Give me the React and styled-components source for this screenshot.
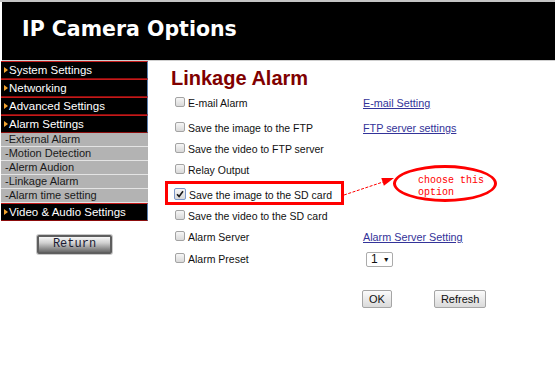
import React from 'react';
import styled, { createGlobalStyle } from 'styled-components';

const GlobalStyle = createGlobalStyle`
  html, body { margin: 0; padding: 0; background: #fff; }
  body { font-family: "Liberation Sans", Arial, sans-serif; }
`;

const Page = styled.div`
  position: relative;
  width: 555px;
  height: 376px;
  overflow: hidden;
  background: #fff;
  border-top: 2px solid #c4c4c4;
  box-sizing: border-box;
`;

const Header = styled.div`
  margin-left: 2px;
  height: 58px;
  background: #000;
  border-bottom: 1px solid #cfcfcf;
`;

const Title = styled.h1`
  margin: 0;
  padding: 15px 0 0 20px;
  font-family: "DejaVu Sans", Verdana, sans-serif;
  font-weight: bold;
  font-size: 20.5px;
  line-height: 24px;
  color: #fff;
`;

const Body = styled.div`
  display: flex;
  align-items: flex-start;
`;

const Sidebar = styled.div`
  width: 147px;
  margin-left: 1px;
  display: flex;
  flex-direction: column;
`;

const MenuItem = styled.div`
  height: 18px;
  box-sizing: border-box;
  background: #000;
  border-top: 1px solid #c41a1a;
  border-bottom: 1px solid #8c0d0d;
  border-right: 1px solid #5a7fb0;
  display: flex;
  align-items: center;
  gap: 1px;
  padding-left: 3px;
  color: #fff;
  font-size: 11.5px;
`;

const Arrow = styled.span`
  width: 0;
  height: 0;
  border-left: 4px solid #f3a531;
  border-top: 3px solid transparent;
  border-bottom: 3px solid transparent;
`;

const SubItem = styled.div`
  height: 14px;
  box-sizing: border-box;
  background: #b3b3b3;
  border-bottom: 1px solid #e4e4e4;
  padding-left: 4px;
  font-size: 11px;
  line-height: 13px;
  color: #1a1a1a;
`;

const ReturnButton = styled.button`
  margin: 14px auto 0;
  width: 75px;
  height: 19px;
  padding: 0;
  box-sizing: border-box;
  border: 2px solid #5e5e5e;
  border-radius: 2px;
  box-shadow: 0 0 0 1px #c8c8c8;
  background: linear-gradient(to bottom, #f6f6f6 0%, #cfcfcf 40%, #8a8a8a 80%, #6a6a6a 100%);
  font-family: "Liberation Mono", "Courier New", monospace;
  font-size: 12px;
  line-height: 15px;
  color: #1b1b33;
`;

const Main = styled.div`
  flex: 1;
  padding-left: 23px;
`;

const Heading = styled.h2`
  margin: 6px 0 3px;
  font-size: 20px;
  line-height: 23px;
  font-weight: bold;
  color: #800000;
`;

const Row = styled.div`
  position: relative;
  display: grid;
  grid-template-columns: 188px auto;
  height: ${p => p.h}px;
  padding-left: 4px;
  font-size: 10.5px;
  line-height: 21px;
  color: #111;
`;

const Option = styled.label`
  display: flex;
  align-items: flex-start;
  gap: 3px;
`;

const Box = styled.span`
  margin-top: ${p => (p.checked ? 3 : 4)}px;
  margin-left: ${p => (p.checked ? -1 : 0)}px;
  width: ${p => (p.checked ? 12 : 10)}px;
  height: ${p => (p.checked ? 12 : 10)}px;
  box-sizing: border-box;
  border: 1px solid ${p => (p.checked ? '#7b97c9' : '#a3a3a3')};
  border-radius: 2px;
  background: linear-gradient(to bottom, #f6f6f6, #d9d9d9);
  display: flex;
  align-items: center;
  justify-content: center;
  flex-shrink: 0;
`;

const Link = styled.a`
  color: #333399;
  font-size: 10.8px;
  text-decoration: underline;
`;

const Select = styled.span`
  margin: 3px 0 0 3px;
  width: 27px;
  height: 15px;
  box-sizing: border-box;
  border: 1px solid #ababab;
  border-radius: 2px;
  background: #fff;
  display: flex;
  align-items: center;
  gap: 5px;
  padding-left: 4px;
  font-size: 12px;
  line-height: 13px;
  color: #111;
`;

const Caret = styled.span`
  font-size: 7px;
`;

const Buttons = styled.div`
  display: flex;
  gap: 42px;
  margin: 20px 0 0 191px;
`;

const Button = styled.button`
  height: 18px;
  padding: 0 ${p => p.pad}px;
  box-sizing: border-box;
  border: 1px solid #a5a5a5;
  border-radius: 2px;
  background: linear-gradient(to bottom, #fbfbfb, #dadada);
  font-family: "Liberation Sans", Arial, sans-serif;
  font-size: 11px;
  line-height: 16px;
  color: #111;
`;

const Highlight = styled.div`
  position: absolute;
  left: -6px;
  top: -4px;
  width: 179px;
  height: 24px;
  box-sizing: border-box;
  border: 3px solid #ff0000;
`;

const Pointer = styled.svg`
  position: absolute;
  left: 340px;
  top: 168px;
`;

const Callout = styled.div`
  position: absolute;
  left: 393px;
  top: 163px;
  width: 104px;
  height: 37px;
  box-sizing: border-box;
  border: 3px solid #ff0000;
  border-radius: 50%;
  padding: 7px 0 0 22px;
  font-family: "Liberation Mono", "Courier New", monospace;
  font-size: 10px;
  line-height: 12px;
  color: #ff0000;
  white-space: pre;
`;

const menuTop = ['System Settings', 'Networking', 'Advanced Settings', 'Alarm Settings'];
const subMenu = ['-External Alarm', '-Motion Detection', '-Alerm Audion', '-Linkage Alarm', '-Alarm time setting'];

const rows = [
  { label: 'E-mail Alarm', link: 'E-mail Setting', h: 25 },
  { label: 'Save the image to the FTP', link: 'FTP server settings', h: 21 },
  { label: 'Save the video to FTP server', h: 21 },
  { label: 'Relay Output', h: 25 },
  { label: 'Save the image to the SD card', checked: true, h: 21 },
  { label: 'Save the video to the SD card', h: 21 },
  { label: 'Alarm Server', link: 'Alarm Server Setting', h: 22 },
  { label: 'Alarm Preset', select: true, h: 21 },
];

function Check() {
  return (
    <svg width="8" height="8" viewBox="0 0 8 8">
      <path d="M1 4.2 L3.1 6.4 L7 1.2" fill="none" stroke="#1a1a1a" strokeWidth="1.6" />
    </svg>
  );
}

export default function App() {
  return (
    <Page>
      <GlobalStyle />
      <Header>
        <Title>IP Camera Options</Title>
      </Header>
      <Body>
        <Sidebar>
          {menuTop.map(m => (
            <MenuItem key={m}><Arrow />{m}</MenuItem>
          ))}
          {subMenu.map(s => (
            <SubItem key={s}>{s}</SubItem>
          ))}
          <MenuItem><Arrow />Video &amp; Audio Settings</MenuItem>
          <ReturnButton>Return</ReturnButton>
        </Sidebar>
        <Main>
          <Heading>Linkage Alarm</Heading>
          {rows.map(r => (
            <Row key={r.label} h={r.h}>
              <Option>
                <Box checked={r.checked}>{r.checked && <Check />}</Box>
                {r.label}
              </Option>
              {r.link && <Link>{r.link}</Link>}
              {r.select && <Select>1<Caret>▼</Caret></Select>}
              {r.checked && <Highlight />}
            </Row>
          ))}
          <Buttons>
            <Button pad={6}>OK</Button>
            <Button pad={6}>Refresh</Button>
          </Buttons>
        </Main>
      </Body>
      <Pointer width="60" height="32" viewBox="0 0 60 32">
        <line x1="4" y1="25" x2="46" y2="11" stroke="#ff0000" strokeWidth="1" strokeDasharray="3 1.5" />
        <polygon points="54,8 43.9,15.7 41.3,8.1" fill="#ff0000" />
      </Pointer>
      <Callout>{'choose this\noption'}</Callout>
    </Page>
  );
}
